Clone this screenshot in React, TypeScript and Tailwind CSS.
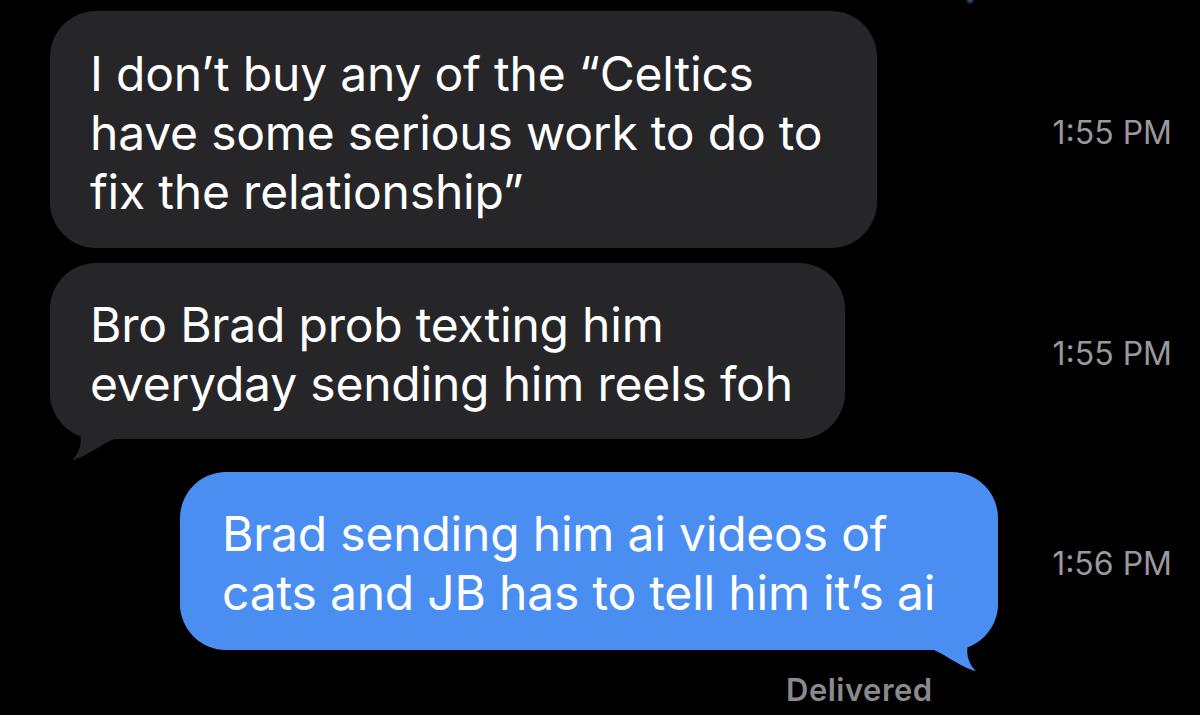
import React from 'react';

const font = { fontFamily: 'Inter, "Noto Sans", sans-serif' };

const Timestamp = ({ time }: { time: string }) => (
  <div className="ml-auto translate-y-[3px] text-[32px] leading-none text-[#98989d]">{time}</div>
);

const DarkTail = () => (
  <svg className="absolute left-0 bottom-[-22px]" width="66" height="78" viewBox="0 -55 66 78">
    <path d="M0,-55 C0,-30 20,-12 30,-4 C32,4 30,14 23,21 C22,22 24,22 26,21 C40,16 52,6 66,0 L66,-55 Z" fill="#262628" />
  </svg>
);

const BlueTail = () => (
  <svg className="absolute right-0 bottom-[-22px]" width="66" height="78" viewBox="-66 -55 66 78">
    <path d="M0,-55 C0,-30 -20,-12 -30,-4 C-32,4 -30,14 -23,21 C-22,22 -24,22 -26,21 C-40,16 -52,6 -66,0 L-66,-55 Z" fill="#4a8ef2" />
  </svg>
);

export default function App() {
  return (
    <div className="relative w-[1200px] h-[715px] bg-black overflow-hidden text-white" style={font}>
      <div className="absolute left-[967px] top-[-3px] w-[6px] h-[6px] rounded-full bg-[#3a4a8a] blur-[1px]" />
      <div className="flex flex-col pt-[11px] pl-[50px] pr-[28px]">
        <div className="flex items-center">
          <div className="w-[827px] rounded-[46px] bg-[#262628] pl-[40px] pr-[10px] pt-[33px] pb-[27px] text-[48px] leading-[59px] tracking-[-0.2px]">
            <div>I don’t buy any of the “Celtics</div>
            <div>have some serious work to do to</div>
            <div>fix the relationship”</div>
          </div>
          <Timestamp time="1:55 PM" />
        </div>

        <div className="flex items-center mt-[15px]">
          <div className="relative w-[795px] rounded-[46px] bg-[#262628] pl-[40px] pr-[10px] pt-[32px] pb-[26px] text-[48px] leading-[59px] tracking-[-0.2px]">
            <DarkTail />
            <div className="relative">Bro Brad prob texting him</div>
            <div className="relative">everyday sending him reels foh</div>
          </div>
          <Timestamp time="1:55 PM" />
        </div>

        <div className="flex items-center mt-[33px]">
          <div className="relative ml-[130px] w-[818px] rounded-[46px] bg-[#4a8ef2] pl-[42px] pr-[10px] pt-[32px] pb-[28px] text-[48px] leading-[59px] tracking-[-0.2px]">
            <BlueTail />
            <div className="relative">Brad sending him ai videos of</div>
            <div className="relative">cats and JB has to tell him it’s ai</div>
          </div>
          <Timestamp time="1:56 PM" />
        </div>

        <div className="pl-[736px] mt-[24px] text-[31px] leading-none font-semibold text-[#8a8a8e] tracking-[0.5px]">Delivered</div>
      </div>
    </div>
  );
}
